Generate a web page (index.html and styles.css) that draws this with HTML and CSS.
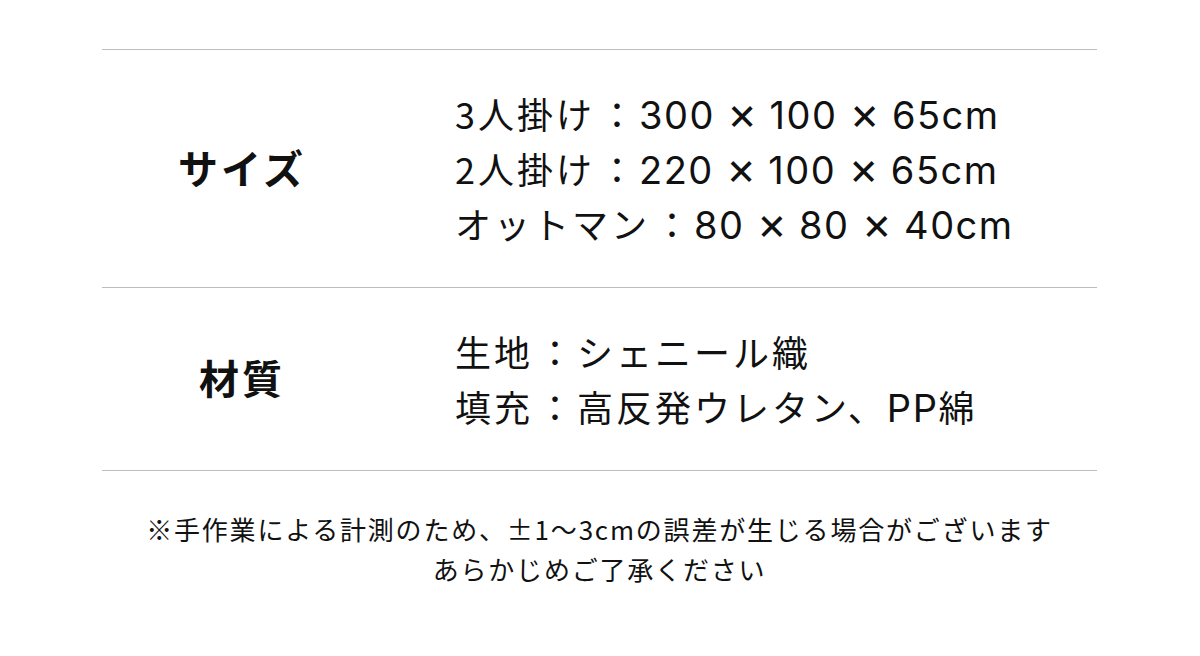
FILE: index.html
```html
<!DOCTYPE html>
<html lang="ja">
<head>
<meta charset="utf-8">
<link rel="stylesheet" href="styles.css">
</head>
<body>
<main class="spec">
  <section class="row row-size">
    <h2 class="label">サイズ</h2>
    <div class="value">
      <p>3人掛け<span class="sep">：</span><span class="dim">300 <span class="x">×</span> 100 <span class="x">×</span> 65cm</span></p>
      <p>2人掛け<span class="sep">：</span><span class="dim">220 <span class="x">×</span> 100 <span class="x">×</span> 65cm</span></p>
      <p>オットマン<span class="sep">：</span><span class="dim">80 <span class="x">×</span> 80 <span class="x">×</span> 40cm</span></p>
    </div>
  </section>
  <section class="row row-material">
    <h2 class="label">材質</h2>
    <div class="value">
      <p>生地<span class="sep">：</span>シェニール織</p>
      <p>填充<span class="sep">：</span>高反発ウレタン、<span class="dim">PP</span>綿</p>
    </div>
  </section>
  <p class="note">※手作業による計測のため、±1〜3cmの誤差が生じる場合がございます<br>あらかじめご了承ください</p>
</main>
</body>
</html>
```

FILE: styles.css
```css
html, body {
  margin: 0;
  padding: 0;
  background: #ffffff;
}
body {
  font-family: "Noto Sans CJK JP", "Noto Sans", sans-serif;
  color: #111111;
  width: 1200px;
  height: 656px;
  overflow: hidden;
}
.spec {
  width: 995px;
  margin: 49px 0 0 102px;
  border-top: 1px solid #bdbdbd;
}
.row {
  display: grid;
  grid-template-columns: 280px 1fr;
  column-gap: 73px;
  align-items: center;
  padding: 36px 0;
  border-bottom: 1px solid #bdbdbd;
}
.label {
  margin: 0;
  text-align: center;
  font-size: 40px;
  font-weight: 700;
  letter-spacing: 3px;
  line-height: 1;
  position: relative;
  top: -2px;
}
.value p {
  margin: 0;
  font-size: 36px;
  letter-spacing: 3px;
  line-height: 55px;
  white-space: nowrap;
}
.sep {
  display: inline-block;
  width: 44px;
  text-align: center;
  letter-spacing: 0;
  line-height: 1;
}
.dim {
  font-family: "Inter", "Noto Sans CJK JP", sans-serif;
  font-size: 38px;
  letter-spacing: 1.5px;
  line-height: 1;
}
.x {
  font-size: 1.2em;
  line-height: 0;
  letter-spacing: 0;
}
.note {
  margin: 38px 0 0;
  text-align: center;
  font-size: 26px;
  letter-spacing: 1.8px;
  line-height: 40px;
}
```
